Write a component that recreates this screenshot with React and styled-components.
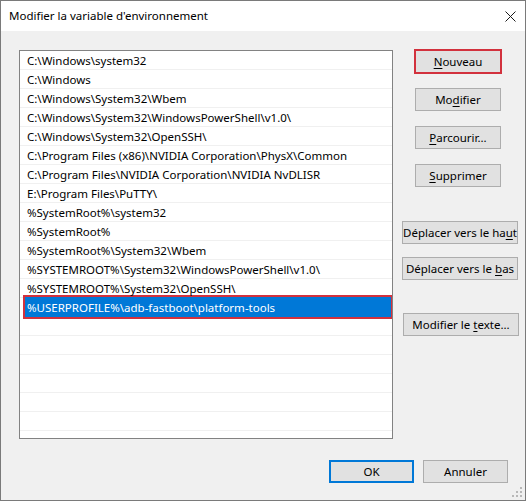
import styled, { createGlobalStyle } from 'styled-components';

const GlobalStyle = createGlobalStyle`
  html, body {
    margin: 0;
    padding: 0;
    background: #ffffff;
  }
  body {
    font-family: "Noto Sans", "Open Sans", sans-serif;
    font-size: 11.5px;
    color: #000000;
  }
`;

const paths = [
  'C:\\Windows\\system32',
  'C:\\Windows',
  'C:\\Windows\\System32\\Wbem',
  'C:\\Windows\\System32\\WindowsPowerShell\\v1.0\\',
  'C:\\Windows\\System32\\OpenSSH\\',
  'C:\\Program Files (x86)\\NVIDIA Corporation\\PhysX\\Common',
  'C:\\Program Files\\NVIDIA Corporation\\NVIDIA NvDLISR',
  'E:\\Program Files\\PuTTY\\',
  '%SystemRoot%\\system32',
  '%SystemRoot%',
  '%SystemRoot%\\System32\\Wbem',
  '%SYSTEMROOT%\\System32\\WindowsPowerShell\\v1.0\\',
  '%SYSTEMROOT%\\System32\\OpenSSH\\',
  '%USERPROFILE%\\adb-fastboot\\platform-tools',
];
const selectedIndex = 13;
const emptyRows = 7;

const Window = styled.div`
  box-sizing: border-box;
  width: 526px;
  height: 501px;
  border: 1px solid #7a7a7a;
  background: #f0f0f0;
  display: flex;
  flex-direction: column;
  position: relative;
  overflow: hidden;
`;

const TitleBar = styled.div`
  height: 30px;
  flex: none;
  background: #ffffff;
  display: flex;
  align-items: center;
  justify-content: space-between;
  padding: 0 0 0 8px;
`;

const Title = styled.span`
  font-size: 11.5px;
  color: #000000;
  margin-top: -1px;
`;

const CloseButton = styled.div`
  width: 46px;
  height: 30px;
  display: flex;
  align-items: center;
  justify-content: center;
  margin-right: -8px;
`;

const Body = styled.div`
  flex: 1;
  display: flex;
  flex-direction: column;
  padding: 19px 7px 0 18px;
`;

const Content = styled.div`
  display: flex;
  align-items: flex-start;
`;

const ListBox = styled.div`
  box-sizing: border-box;
  flex: none;
  width: 374px;
  height: 389px;
  border: 1px solid #828282;
  background: #ffffff;
  overflow: hidden;
  display: flex;
  flex-direction: column;
`;

const Row = styled.div`
  box-sizing: border-box;
  height: 19px;
  flex: none;
  border-bottom: 1px solid #f0f0f0;
  padding-left: 7px;
  display: flex;
  align-items: center;
  white-space: nowrap;
  position: relative;
  ${(p) =>
    p.selected &&
    `
    color: #ffffff;
    border-bottom-color: transparent;
    &::before {
      content: '';
      position: absolute;
      left: 5px;
      right: 1px;
      top: -1px;
      bottom: -1px;
      background: #0078d7;
      outline: 2px solid #d2313d;
      z-index: 0;
    }
  `}
`;

const RowText = styled.span`
  position: relative;
  z-index: 1;
`;

const SideColumn = styled.div`
  flex: none;
  display: flex;
  flex-direction: column;
  margin-left: 9px;
`;

const Button = styled.div`
  box-sizing: border-box;
  flex: none;
  width: ${(p) => p.width || 86}px;
  height: 23px;
  margin-left: ${(p) => p.indent || 0}px;
  margin-top: ${(p) => p.gap || 0}px;
  background: #e1e1e1;
  border: 1px solid ${(p) => (p.focused ? '#0078d7' : '#adadad')};
  box-shadow: ${(p) => (p.focused ? 'inset 0 0 0 1px #0078d7' : 'none')};
  outline: ${(p) => (p.marked ? '2px solid #d2313d' : 'none')};
  outline-offset: -1px;
  display: flex;
  align-items: center;
  justify-content: center;
  white-space: nowrap;
  color: #000000;
`;

const Key = styled.span`
  text-decoration: underline;
  text-underline-offset: 2px;
`;

const Footer = styled.div`
  display: flex;
  justify-content: flex-end;
  gap: 9px;
  margin-top: 21px;
  padding-right: 10px;
`;

const Grip = styled.svg`
  position: absolute;
  right: 3px;
  bottom: 3px;
`;

function Label({ text, k }) {
  if (k === undefined) return <span>{text}</span>;
  return (
    <span>
      {text.slice(0, k)}
      <Key>{text[k]}</Key>
      {text.slice(k + 1)}
    </span>
  );
}

export default function App() {
  return (
    <>
      <GlobalStyle />
      <Window>
        <TitleBar>
          <Title>Modifier la variable d'environnement</Title>
          <CloseButton>
            <svg width="11" height="11" viewBox="0 0 11 11">
              <path d="M0.5 0.5 L10.5 10.5 M10.5 0.5 L0.5 10.5" stroke="#1a1a1a" strokeWidth="1" fill="none" />
            </svg>
          </CloseButton>
        </TitleBar>
        <Body>
          <Content>
            <ListBox>
              {paths.map((path, i) => (
                <Row key={path} selected={i === selectedIndex}>
                  <RowText>{path}</RowText>
                </Row>
              ))}
              {Array.from({ length: emptyRows }).map((_, i) => (
                <Row key={'empty' + i} />
              ))}
            </ListBox>
            <SideColumn>
              <Button indent={13} gap={0} marked>
                <Label text="Nouveau" k={0} />
              </Button>
              <Button indent={13} gap={15}>
                <Label text="Modifier" k={2} />
              </Button>
              <Button indent={13} gap={15}>
                <Label text="Parcourir..." k={0} />
              </Button>
              <Button indent={13} gap={15}>
                <Label text="Supprimer" k={0} />
              </Button>
              <Button width={116} gap={34}>
                <Label text="Déplacer vers le haut" k={19} />
              </Button>
              <Button width={116} gap={13}>
                <Label text="Déplacer vers le bas" k={17} />
              </Button>
              <Button width={116} indent={1} gap={33}>
                <Label text="Modifier le texte..." k={12} />
              </Button>
            </SideColumn>
          </Content>
          <Footer>
            <Button width={85} focused>
              <Label text="OK" />
            </Button>
            <Button width={85}>
              <Label text="Annuler" />
            </Button>
          </Footer>
        </Body>
        <Grip width="10" height="10" viewBox="0 0 10 10">
          <g fill="#b8b8b8">
            <rect x="8" y="0" width="2" height="2" />
            <rect x="4" y="4" width="2" height="2" />
            <rect x="8" y="4" width="2" height="2" />
            <rect x="0" y="8" width="2" height="2" />
            <rect x="4" y="8" width="2" height="2" />
            <rect x="8" y="8" width="2" height="2" />
          </g>
        </Grip>
      </Window>
    </>
  );
}
